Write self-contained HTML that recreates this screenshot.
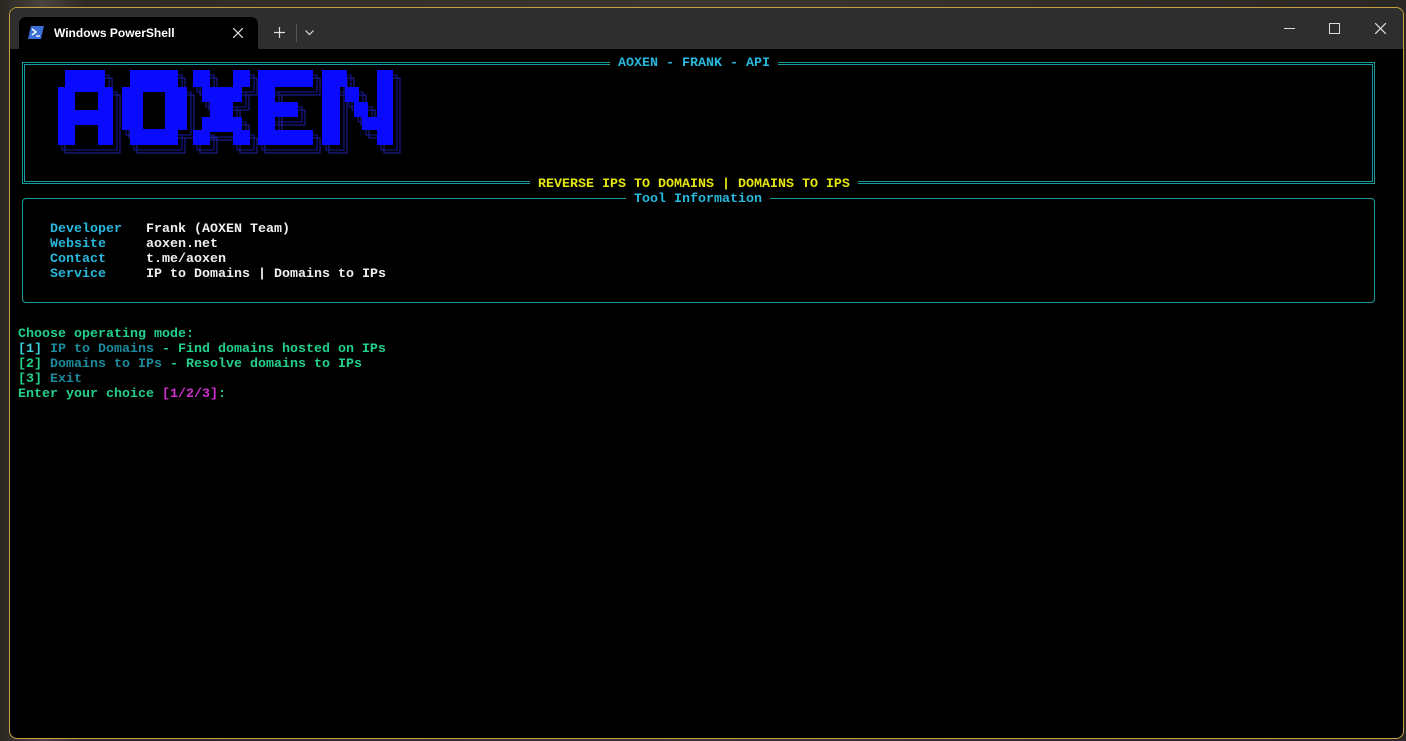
<!DOCTYPE html>
<html><head><meta charset="utf-8"><style>
html,body{margin:0;padding:0;width:1406px;height:741px;overflow:hidden;background:#3a3530;}
body{position:relative;font-family:"Liberation Mono",monospace;font-size:13.33px;}
.bg{position:absolute;inset:0;background:linear-gradient(90deg,#2a2622 0,#4a4540 3%,#2e2a26 6%,#3a3631 50%,#2a2724 100%);}
.win{position:absolute;left:9px;top:7px;width:1393px;height:730px;border:1px solid #c9a040;border-radius:8px;background:#000;overflow:hidden;}
.tbar{position:absolute;left:0;top:0;width:100%;height:41px;background:#2e2e2e;}
.tab{position:absolute;left:9px;top:9px;width:239px;height:32px;background:#000;border-radius:7px 7px 0 0;font-family:"Liberation Sans",sans-serif;font-size:12px;color:#fff;}
.t{position:absolute;white-space:pre;line-height:15px;}
.b{font-weight:bold;}
.cy{color:#29b8db}.ye{color:#e5e510}.gr{color:#23d18b}.dc{color:#1c8a9c}.mg{color:#d030d0}.wh{color:#f0f0f0}.lc{color:#3fd0e0}
.lbl{background:#000;padding:0 8px;}
</style></head><body>
<div class="bg"></div>
<div class="win">
 <div class="tbar">
  <div class="tab">
   <svg style="position:absolute;left:9px;top:9px" width="16" height="13"><polygon points="3,0 16,0 13,13 0,13" fill="#3a6fd8"/><polyline points="4,3 8,6 4,9" stroke="#fff" stroke-width="1.5" fill="none"/><line x1="8" y1="10" x2="12" y2="10" stroke="#fff" stroke-width="1.3"/></svg>
   <span style="position:absolute;left:35px;top:9px;font-weight:bold;font-size:12px">Windows PowerShell</span>
   <svg style="position:absolute;left:214px;top:11px" width="10" height="10"><path d="M0,0L10,10M10,0L0,10" stroke="#ddd" stroke-width="1.2"/></svg>
  </div>
  <svg style="position:absolute;left:264px;top:19px" width="11" height="11"><path d="M5.5,0V11M0,5.5H11" stroke="#ddd" stroke-width="1.2"/></svg>
  <div style="position:absolute;left:286px;top:16px;width:1px;height:18px;background:#555"></div>
  <svg style="position:absolute;left:295px;top:22px" width="9" height="6"><path d="M0.5,0.5L4.5,4.5L8.5,0.5" stroke="#ddd" fill="none" stroke-width="1.2"/></svg>
  <div style="position:absolute;left:1274px;top:20px;width:11px;height:1px;background:#ddd"></div>
  <div style="position:absolute;left:1319px;top:15px;width:9px;height:9px;border:1px solid #ddd"></div>
  <svg style="position:absolute;left:1365px;top:15px" width="11" height="11"><path d="M0,0L11,11M11,0L0,11" stroke="#ddd" stroke-width="1.2"/></svg>
 </div>
</div>
<div style="position:absolute;left:22px;top:62px;width:1351px;height:120px;border:1px solid #1a9a9a;"></div>
<div style="position:absolute;left:24px;top:64px;width:1347px;height:116px;border:1px solid #1a9a9a;"></div>
<div class="t b cy" style="left:610px;top:56px"><span class="lbl">AOXEN - FRANK - API</span></div>
<div class="t b ye" style="left:530px;top:177px"><span class="lbl">REVERSE IPS TO DOMAINS | DOMAINS TO IPS</span></div>
<div style="position:absolute;left:22px;top:198px;width:1351px;height:103px;border:1px solid #1a9a9a;border-radius:4px;"></div>
<div class="t b cy" style="left:626px;top:192px"><span class="lbl">Tool Information</span></div>
<svg style="position:absolute;left:0;top:0" width="1406" height="741">
 <defs><g id="L">
  <rect x="65" y="70" width="40" height="17"/><rect x="58" y="87" width="55" height="58"/>
  <rect x="130" y="70" width="48" height="17"/><rect x="122" y="87" width="65" height="43"/><rect x="130" y="130" width="48" height="15"/>
  <rect x="193" y="70" width="17" height="17"/><rect x="233" y="70" width="17" height="17"/><rect x="202" y="87" width="40" height="15"/><rect x="210" y="102" width="23" height="15"/><rect x="202" y="117" width="40" height="15"/><rect x="193" y="130" width="17" height="15"/><rect x="233" y="130" width="17" height="15"/>
  <rect x="258" y="70" width="55" height="17"/><rect x="258" y="87" width="17" height="43"/><rect x="258" y="102" width="40" height="15"/><rect x="258" y="130" width="55" height="15"/>
  <rect x="322" y="70" width="18" height="75"/><rect x="322" y="70" width="25" height="17"/><rect x="345" y="87" width="14" height="15"/><rect x="354" y="102" width="14" height="15"/><rect x="362" y="117" width="15" height="13"/><rect x="377" y="70" width="16" height="75"/>
 </g></defs>
 <use href="#L" transform="translate(7,8)" fill="none" stroke="#2020a8" stroke-width="1"/>
 <use href="#L" transform="translate(4,5)" fill="none" stroke="#1818a0" stroke-width="1"/>
 <use href="#L" fill="#0a0aff"/>
 <g fill="#000"><rect x="75" y="92" width="23" height="18"/><rect x="75" y="125" width="23" height="20"/><rect x="143" y="92" width="22" height="37"/></g>
</svg>
<div class="t b" style="left:50px;top:222px"><span class="cy">Developer</span>   <span class="wh">Frank (AOXEN Team)</span>
<span class="cy">Website</span>     <span class="wh">aoxen.net</span>
<span class="cy">Contact</span>     <span class="wh">t.me/aoxen</span>
<span class="cy">Service</span>     <span class="wh">IP to Domains | Domains to IPs</span></div>
<div class="t b" style="left:18px;top:327px"><span class="gr">Choose operating mode:</span>
<span class="lc">[1]</span> <span class="dc">IP to Domains</span><span class="gr"> - Find domains hosted on IPs</span>
<span class="gr">[2]</span> <span class="dc">Domains to IPs</span><span class="gr"> - Resolve domains to IPs</span>
<span class="gr">[3]</span> <span class="dc">Exit</span>
<span class="gr">Enter your choice </span><span class="mg">[1/2/3]</span><span class="gr">:</span></div>
</body></html>
